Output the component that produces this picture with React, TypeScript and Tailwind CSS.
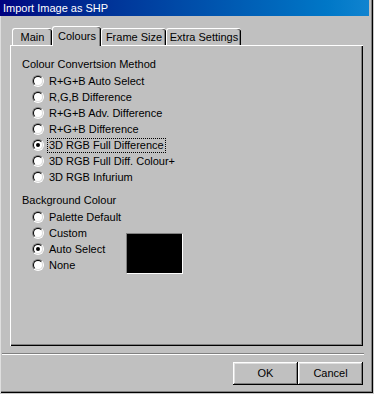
import React from 'react';

const methods = [
  'R+G+B Auto Select',
  'R,G,B Difference',
  'R+G+B Adv. Difference',
  'R+G+B Difference',
  '3D RGB Full Difference',
  '3D RGB Full Diff. Colour+',
  '3D RGB Infurium',
];

const backgrounds = ['Palette Default', 'Custom', 'Auto Select', 'None'];

function Radio({ label, checked, focused }: { label: string; checked?: boolean; focused?: boolean }) {
  return (
    <div className="flex items-center h-[16px]">
      <span className="w-[12px] h-[12px] rounded-full border border-t-[#808080] border-l-[#808080] border-r-white border-b-white flex">
        <span className="w-full h-full rounded-full border border-t-black border-l-black border-r-[#dfdfdf] border-b-[#dfdfdf] bg-white flex items-center justify-center">
          {checked && <span className="w-[4px] h-[4px] rounded-full bg-black" />}
        </span>
      </span>
      <span
        className={`ml-[3px] px-[1px] leading-[13px] border ${
          focused ? 'border-dotted border-black' : 'border-transparent'
        }`}
      >
        {label}
      </span>
    </div>
  );
}

function Tab({ label, width, selected }: { label: string; width: string; selected?: boolean }) {
  return (
    <div
      className={`${width} ${
        selected ? 'h-[20px] mb-[-1px] z-10 pt-[1px]' : 'h-[17px]'
      } relative bg-[#c0c0c0] border-t border-l border-white rounded-tl-[3px] rounded-tr-[3px] shadow-[inset_-1px_0_#000,inset_-2px_0_#808080] flex justify-center`}
    >
      <span className="leading-[16px]">{label}</span>
    </div>
  );
}

export default function App() {
  return (
    <div className="w-[374px] h-[394px] bg-[#c8c8c8] font-['Liberation_Sans',Arial,sans-serif] text-[11px] text-black">
      <div className="w-[373px] h-[393px] bg-[#c0c0c0] flex flex-col border-l border-[#dfdfdf] shadow-[inset_-1px_-1px_#000,inset_-2px_-2px_#808080]">
        {/* Title bar */}
        <div className="h-[16px] w-[369px] -ml-[1px] bg-gradient-to-r from-[#000080] to-[#1084d0] flex items-center pl-[3px]">
          <span className="text-white leading-[16px]">Import Image as SHP</span>
        </div>

        <div className="pl-[9px]">
          {/* Tabs */}
          <div className="mt-[10px] h-[19px] flex items-end pl-[2px]">
            <Tab label="Main" width="w-[40px]" />
            <Tab label="Colours" width="w-[49px]" selected />
            <Tab label="Frame Size" width="w-[65px]" />
            <Tab label="Extra Settings" width="w-[75px]" />
          </div>

          {/* Panel */}
          <div className="w-[353px] h-[301px] bg-[#c0c0c0] shadow-[inset_1px_1px_#fff,inset_-1px_-1px_#000,inset_-2px_-2px_#808080] pl-[12px] pt-[11px]">
            <div className="leading-[16px]">Colour Convertsion Method</div>
            <div className="mt-[1px] ml-[10px]">
              {methods.map((m, i) => (
                <Radio key={m} label={m} checked={i === 4} focused={i === 4} />
              ))}
            </div>

            <div className="leading-[16px] mt-[7px]">Background Colour</div>
            <div className="mt-[1px] ml-[10px] flex items-start">
              <div className="w-[94px]">
                {backgrounds.map((b, i) => (
                  <Radio key={b} label={b} checked={i === 2} />
                ))}
              </div>
              <div className="mt-[24px] w-[57px] h-[41px] bg-black border border-t-[#808080] border-l-[#808080] border-r-white border-b-white" />
            </div>
          </div>
        </div>

        {/* Separator */}
        <div className="mt-[7px] ml-[1px] w-[362px] h-[2px] border-t border-[#808080] border-b border-b-white" />

        {/* Buttons */}
        <div className="mt-[7px] flex pl-[232px]">
          <button className="w-[65px] h-[23px] bg-[#c0c0c0] shadow-[inset_-1px_-1px_#000,inset_1px_1px_#fff,inset_-2px_-2px_#808080,inset_2px_2px_#dfdfdf] leading-[23px]">
            OK
          </button>
          <button className="w-[65px] h-[23px] bg-[#c0c0c0] shadow-[inset_-1px_-1px_#000,inset_1px_1px_#fff,inset_-2px_-2px_#808080,inset_2px_2px_#dfdfdf] leading-[23px]">
            Cancel
          </button>
        </div>
      </div>
    </div>
  );
}
